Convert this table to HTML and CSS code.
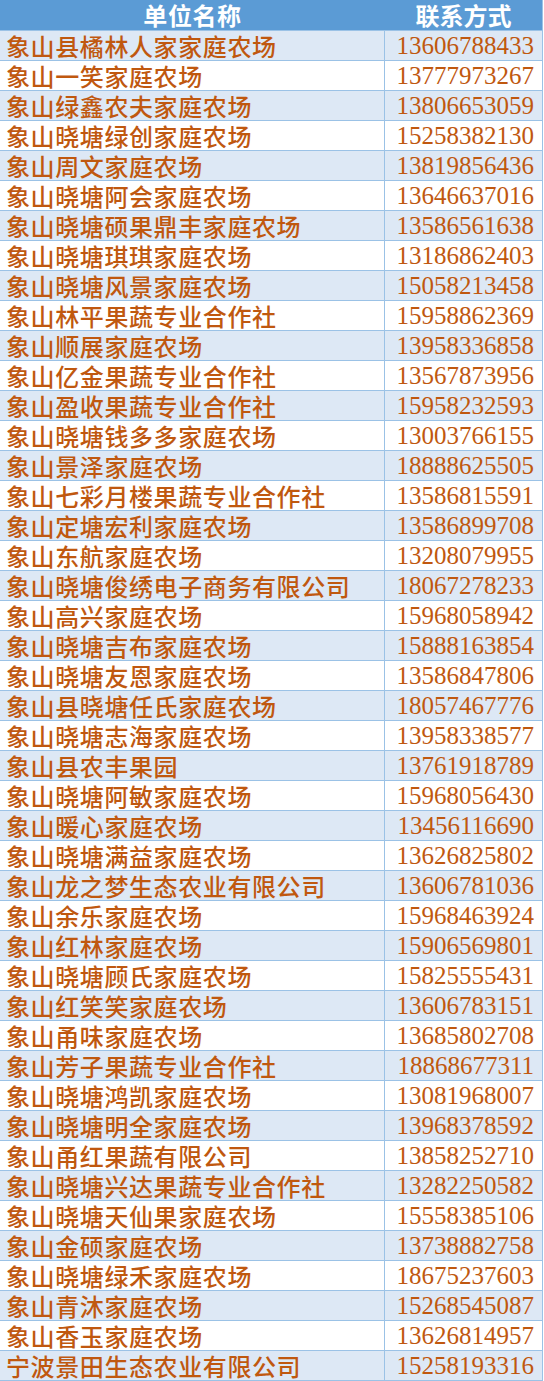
FILE: index.html
```html
<!DOCTYPE html>
<html lang="zh-CN">
<head>
<meta charset="utf-8">
<title>名单</title>
<link rel="stylesheet" href="styles.css">
</head>
<body>
<div class="sheet">
  <div class="row head"><div class="name">单位名称</div><div class="phone">联系方式</div></div>
  <div class="row alt"><div class="name">象山县橘林人家家庭农场</div><div class="phone">13606788433</div></div>
  <div class="row"><div class="name">象山一笑家庭农场</div><div class="phone">13777973267</div></div>
  <div class="row alt"><div class="name">象山绿鑫农夫家庭农场</div><div class="phone">13806653059</div></div>
  <div class="row"><div class="name">象山晓塘绿创家庭农场</div><div class="phone">15258382130</div></div>
  <div class="row alt"><div class="name">象山周文家庭农场</div><div class="phone">13819856436</div></div>
  <div class="row"><div class="name">象山晓塘阿会家庭农场</div><div class="phone">13646637016</div></div>
  <div class="row alt"><div class="name">象山晓塘硕果鼎丰家庭农场</div><div class="phone">13586561638</div></div>
  <div class="row"><div class="name">象山晓塘琪琪家庭农场</div><div class="phone">13186862403</div></div>
  <div class="row alt"><div class="name">象山晓塘风景家庭农场</div><div class="phone">15058213458</div></div>
  <div class="row"><div class="name">象山林平果蔬专业合作社</div><div class="phone">15958862369</div></div>
  <div class="row alt"><div class="name">象山顺展家庭农场</div><div class="phone">13958336858</div></div>
  <div class="row"><div class="name">象山亿金果蔬专业合作社</div><div class="phone">13567873956</div></div>
  <div class="row alt"><div class="name">象山盈收果蔬专业合作社</div><div class="phone">15958232593</div></div>
  <div class="row"><div class="name">象山晓塘钱多多家庭农场</div><div class="phone">13003766155</div></div>
  <div class="row alt"><div class="name">象山景泽家庭农场</div><div class="phone">18888625505</div></div>
  <div class="row"><div class="name">象山七彩月楼果蔬专业合作社</div><div class="phone">13586815591</div></div>
  <div class="row alt"><div class="name">象山定塘宏利家庭农场</div><div class="phone">13586899708</div></div>
  <div class="row"><div class="name">象山东航家庭农场</div><div class="phone">13208079955</div></div>
  <div class="row alt"><div class="name">象山晓塘俊绣电子商务有限公司</div><div class="phone">18067278233</div></div>
  <div class="row"><div class="name">象山高兴家庭农场</div><div class="phone">15968058942</div></div>
  <div class="row alt"><div class="name">象山晓塘吉布家庭农场</div><div class="phone">15888163854</div></div>
  <div class="row"><div class="name">象山晓塘友恩家庭农场</div><div class="phone">13586847806</div></div>
  <div class="row alt"><div class="name">象山县晓塘任氏家庭农场</div><div class="phone">18057467776</div></div>
  <div class="row"><div class="name">象山晓塘志海家庭农场</div><div class="phone">13958338577</div></div>
  <div class="row alt"><div class="name">象山县农丰果园</div><div class="phone">13761918789</div></div>
  <div class="row"><div class="name">象山晓塘阿敏家庭农场</div><div class="phone">15968056430</div></div>
  <div class="row alt"><div class="name">象山暖心家庭农场</div><div class="phone">13456116690</div></div>
  <div class="row"><div class="name">象山晓塘满益家庭农场</div><div class="phone">13626825802</div></div>
  <div class="row alt"><div class="name">象山龙之梦生态农业有限公司</div><div class="phone">13606781036</div></div>
  <div class="row"><div class="name">象山余乐家庭农场</div><div class="phone">15968463924</div></div>
  <div class="row alt"><div class="name">象山红林家庭农场</div><div class="phone">15906569801</div></div>
  <div class="row"><div class="name">象山晓塘顾氏家庭农场</div><div class="phone">15825555431</div></div>
  <div class="row alt"><div class="name">象山红笑笑家庭农场</div><div class="phone">13606783151</div></div>
  <div class="row"><div class="name">象山甬味家庭农场</div><div class="phone">13685802708</div></div>
  <div class="row alt"><div class="name">象山芳子果蔬专业合作社</div><div class="phone">18868677311</div></div>
  <div class="row"><div class="name">象山晓塘鸿凯家庭农场</div><div class="phone">13081968007</div></div>
  <div class="row alt"><div class="name">象山晓塘明全家庭农场</div><div class="phone">13968378592</div></div>
  <div class="row"><div class="name">象山甬红果蔬有限公司</div><div class="phone">13858252710</div></div>
  <div class="row alt"><div class="name">象山晓塘兴达果蔬专业合作社</div><div class="phone">13282250582</div></div>
  <div class="row"><div class="name">象山晓塘天仙果家庭农场</div><div class="phone">15558385106</div></div>
  <div class="row alt"><div class="name">象山金硕家庭农场</div><div class="phone">13738882758</div></div>
  <div class="row"><div class="name">象山晓塘绿禾家庭农场</div><div class="phone">18675237603</div></div>
  <div class="row alt"><div class="name">象山青沐家庭农场</div><div class="phone">15268545087</div></div>
  <div class="row"><div class="name">象山香玉家庭农场</div><div class="phone">13626814957</div></div>
  <div class="row alt"><div class="name">宁波景田生态农业有限公司</div><div class="phone">15258193316</div></div>
</div>
</body>
</html>
```

FILE: styles.css
```css
html, body {
  margin: 0;
  padding: 0;
  background: #ffffff;
}

.sheet {
  width: 542px;
  border-right: 1px solid #9bc2e6;
  font-family: "Noto Sans CJK SC", sans-serif;
  color: #c0580f;
}

.row {
  display: flex;
  height: 29px;
  border-bottom: 1px solid #9bc2e6;
  background: #ffffff;
}

.row.alt {
  background: #dde8f5;
}

.row.head {
  height: 30px;
  background: #5b9bd5;
  color: #ffffff;
  font-weight: bold;
}

.name {
  width: 385px;
  box-sizing: border-box;
  padding-left: 6px;
  border-right: 1px solid #9bc2e6;
  font-size: 24px;
  font-weight: 500;
  letter-spacing: 0.6px;
  line-height: 29px;
  white-space: nowrap;
}

.phone {
  flex: 1;
  text-align: right;
  padding-right: 8px;
  font-family: "Liberation Serif", serif;
  font-size: 25px;
  line-height: 29px;
  white-space: nowrap;
}

.head .name {
  text-align: center;
  padding-left: 0;
  border-right: none;
  font-weight: bold;
  line-height: 30px;
}

.head .phone {
  text-align: center;
  padding-right: 0;
  font-family: "Noto Sans CJK SC", sans-serif;
  font-size: 24px;
  line-height: 30px;
}
```
